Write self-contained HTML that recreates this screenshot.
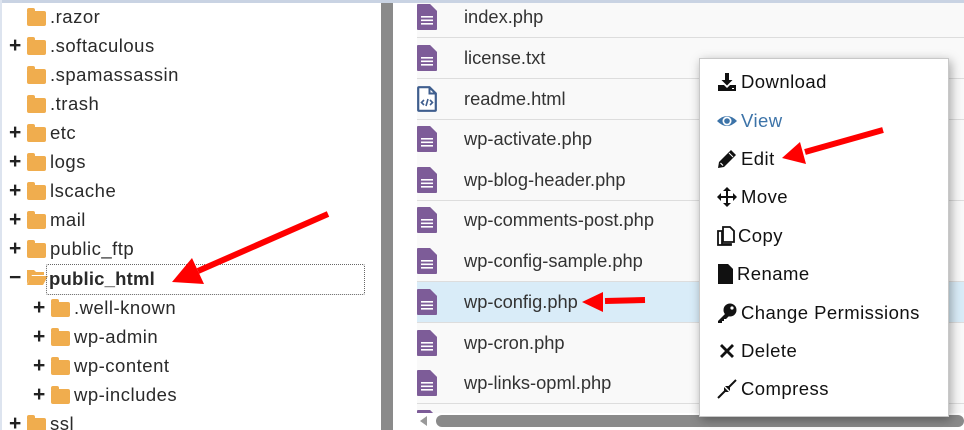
<!DOCTYPE html>
<html><head><meta charset="utf-8"><style>
*{margin:0;padding:0;box-sizing:border-box}
html,body{width:964px;height:430px;overflow:hidden}
body{background:#fff;position:relative;font-family:"Liberation Sans",sans-serif;color:#222}
.abs{position:absolute}
.tr{position:absolute;font-size:18.5px;letter-spacing:0.5px;line-height:20px;color:#2a2a2a;white-space:nowrap}
.fold{position:absolute;width:19px;height:15px;background:#f0ad4e;border-radius:2px}
.fold:before{content:"";position:absolute;left:0;top:-3px;width:8px;height:4px;background:#f0ad4e;border-radius:2px 2px 0 0}
.pl{position:absolute;font-size:21px;font-weight:bold;line-height:20px;color:#222}
.row{position:absolute;left:417px;width:547px;height:41px;background:#f9f9f9;border-bottom:1px solid #ddd}
.fn{position:absolute;left:464px;font-size:18.3px;line-height:20px;color:#333;white-space:nowrap}
.fi{position:absolute;left:417px;width:20px;height:26px}
.mi{position:absolute;left:741px;font-size:18.5px;letter-spacing:0.45px;line-height:20px;color:#111;white-space:nowrap}
.ic{position:absolute;left:717px;width:20px;height:20px}
</style></head><body>
<div class="abs" style="left:0;top:0;width:964px;height:3px;background:#c9d3e3"></div>
<div class="abs" style="left:0;top:0;width:2px;height:430px;background:#dde4ef"></div>
<div class="abs" style="left:381px;top:3px;width:12px;height:427px;background:#8a8a8a"></div>

<div class="fold" style="left:27px;top:11px"></div><div class="tr" style="left:50px;top:7px">.razor</div>
<div class="pl" style="left:9px;top:36px">+</div><div class="fold" style="left:27px;top:40px"></div><div class="tr" style="left:50px;top:36px">.softaculous</div>
<div class="fold" style="left:27px;top:69px"></div><div class="tr" style="left:50px;top:65px">.spamassassin</div>
<div class="fold" style="left:27px;top:98px"></div><div class="tr" style="left:50px;top:94px">.trash</div>
<div class="pl" style="left:9px;top:123px">+</div><div class="fold" style="left:27px;top:127px"></div><div class="tr" style="left:50px;top:123px">etc</div>
<div class="pl" style="left:9px;top:152px">+</div><div class="fold" style="left:27px;top:156px"></div><div class="tr" style="left:50px;top:152px">logs</div>
<div class="pl" style="left:9px;top:181px">+</div><div class="fold" style="left:27px;top:185px"></div><div class="tr" style="left:50px;top:181px">lscache</div>
<div class="pl" style="left:9px;top:210px">+</div><div class="fold" style="left:27px;top:214px"></div><div class="tr" style="left:50px;top:210px">mail</div>
<div class="pl" style="left:9px;top:239px">+</div><div class="fold" style="left:27px;top:243px"></div><div class="tr" style="left:50px;top:239px">public_ftp</div>
<div class="pl" style="left:9px;top:268px">−</div>
<svg class="abs" style="left:26px;top:268px" width="22" height="18"><path d="M1 2h7l2 2h8v3H6L1 16z" fill="#f0ad4e"/><path d="M5 8h17l-5 9H1z" fill="#f0ad4e"/></svg>
<div class="abs" style="left:46px;top:264px;width:319px;height:31px;border:1px dotted #666;border-radius:2px"></div>
<div class="tr" style="left:49px;top:269px;font-weight:bold;letter-spacing:0.2px">public_html</div>
<div class="pl" style="left:33px;top:298px">+</div><div class="fold" style="left:51px;top:302px"></div><div class="tr" style="left:74px;top:298px">.well-known</div>
<div class="pl" style="left:33px;top:327px">+</div><div class="fold" style="left:51px;top:331px"></div><div class="tr" style="left:74px;top:327px">wp-admin</div>
<div class="pl" style="left:33px;top:356px">+</div><div class="fold" style="left:51px;top:360px"></div><div class="tr" style="left:74px;top:356px">wp-content</div>
<div class="pl" style="left:33px;top:385px">+</div><div class="fold" style="left:51px;top:389px"></div><div class="tr" style="left:74px;top:385px">wp-includes</div>
<div class="pl" style="left:9px;top:414px">+</div><div class="fold" style="left:27px;top:418px"></div><div class="tr" style="left:50px;top:414px">ssl</div>

<div class="row" style="top:3px;height:35px"></div>
<div class="row" style="top:38px"></div>
<div class="row" style="top:79px"></div>
<div class="row" style="top:120px"></div>
<div class="row" style="top:160px"></div>
<div class="row" style="top:201px"></div>
<div class="row" style="top:241px"></div>
<div class="row" style="top:282px;background:#d9ecf8"></div>
<div class="row" style="top:323px"></div>
<div class="row" style="top:363px"></div>
<div class="row" style="top:404px;border:none"></div>

<svg width="0" height="0" style="position:absolute"><defs>
<symbol id="doc" viewBox="0 0 20 26"><path d="M0 1Q0 0 1 0h12l7 7v18q0 1-1 1H1q-1 0-1-1z" fill="#7d5c98"/><path d="M13 0v7h7" fill="#fff" opacity=".9"/><path d="M13 0l7 7h-7z" fill="#7d5c98"/><rect x="4" y="12" width="12" height="1.6" fill="#fff"/><rect x="4" y="15.5" width="12" height="1.6" fill="#fff"/><rect x="4" y="19" width="12" height="1.6" fill="#fff"/></symbol>
</defs></svg>
<svg class="fi" style="top:4px"><use href="#doc"/></svg><div class="fn" style="top:7px">index.php</div>
<svg class="fi" style="top:45px"><use href="#doc"/></svg><div class="fn" style="top:48px">license.txt</div>
<svg class="fi" style="top:86px" viewBox="0 0 20 26"><path d="M1.2 2Q1.2 1.2 2 1.2h10.5l6.3 6.3V24q0 .8-.8.8H2q-.8 0-.8-.8z" fill="#fff" stroke="#3f5e8e" stroke-width="2.2"/><path d="M12.5 1.5v6h6" fill="none" stroke="#3f5e8e" stroke-width="2"/><path d="M7 14l-2.5 2.5L7 19M13 14l2.5 2.5L13 19M11 13l-2 7" fill="none" stroke="#3f5e8e" stroke-width="1.6"/></svg><div class="fn" style="top:89px">readme.html</div>
<svg class="fi" style="top:126px"><use href="#doc"/></svg><div class="fn" style="top:129px">wp-activate.php</div>
<svg class="fi" style="top:167px"><use href="#doc"/></svg><div class="fn" style="top:170px">wp-blog-header.php</div>
<svg class="fi" style="top:207px"><use href="#doc"/></svg><div class="fn" style="top:210px">wp-comments-post.php</div>
<svg class="fi" style="top:248px"><use href="#doc"/></svg><div class="fn" style="top:251px">wp-config-sample.php</div>
<svg class="fi" style="top:289px"><use href="#doc"/></svg><div class="fn" style="top:292px">wp-config.php</div>
<svg class="fi" style="top:330px"><use href="#doc"/></svg><div class="fn" style="top:333px">wp-cron.php</div>
<svg class="fi" style="top:370px"><use href="#doc"/></svg><div class="fn" style="top:373px">wp-links-opml.php</div>
<svg class="fi" style="top:410px"><use href="#doc"/></svg>
<div class="abs" style="left:417px;top:413px;width:547px;height:17px;background:#fff"></div>
<svg class="abs" style="left:419px;top:415px" width="10" height="12"><path d="M8 1L1 6l7 5z" fill="#999"/></svg>
<div class="abs" style="left:436px;top:415px;width:528px;height:12px;background:#8a8a8a;border-radius:6px"></div>

<div class="abs" style="left:699px;top:58px;width:250px;height:359px;background:#fff;border:1px solid #c8c8c8;box-shadow:2px 3px 10px rgba(0,0,0,.35)"></div>
<svg class="ic" style="top:72px" viewBox="0 0 20 20"><path d="M8 1h4v7h3.5L10 13.5 4.5 8H8z" fill="#111"/><path d="M1 13h6l3 3 3-3h6v6H1z" fill="#111"/><rect x="15" y="16" width="2" height="1" fill="#fff"/></svg><div class="mi" style="top:72px">Download</div>
<svg class="ic" style="top:111px" viewBox="0 0 20 20"><path d="M0 10Q10 0 20 10Q10 20 0 10z" fill="#3c73a8"/><circle cx="10" cy="10" r="4.5" fill="#fff"/><circle cx="10" cy="10" r="2.8" fill="#3c73a8"/></svg><div class="mi" style="top:111px;color:#3c73a8">View</div>
<svg class="ic" style="top:149px" viewBox="0 0 20 20"><path d="M14 1l5 5L7 18l-6 1 1-6z" fill="#111"/><path d="M3.5 14l2.5 2.5" stroke="#fff" stroke-width="1.2"/><path d="M12 4l4 4" stroke="#fff" stroke-width="1"/></svg><div class="mi" style="top:149px">Edit</div>
<svg class="ic" style="top:187px" viewBox="0 0 20 20"><path d="M10 0l4 4h-3v5h5V6l4 4-4 4v-3h-5v5h3l-4 4-4-4h3v-5H4v3l-4-4 4-4v3h5V4H6z" fill="#111"/></svg><div class="mi" style="top:187px">Move</div>
<svg class="ic" style="top:226px" viewBox="0 0 20 20"><path d="M6 1h7l4 4v11H6z M1 5h4v13h9v1H1z" fill="none" stroke="#111" stroke-width="1.8"/></svg><div class="mi" style="top:226px;left:738px">Copy</div>
<svg class="ic" style="top:264px;left:716px" viewBox="0 0 20 20"><path d="M2 0h10l5 5v15H2z" fill="#111"/><path d="M12 0v5h5" fill="#fff"/><path d="M12 0l5 5h-5z" fill="#111"/></svg><div class="mi" style="top:264px;left:737px">Rename</div>
<svg class="ic" style="top:303px" viewBox="0 0 20 20"><circle cx="13" cy="7" r="6.5" fill="#111"/><path d="M9 10L1 18v2h4v-2h2v-2h2l3-3z" fill="#111"/><circle cx="15" cy="5" r="1.6" fill="#fff"/></svg><div class="mi" style="top:303px">Change Permissions</div>
<svg class="ic" style="top:341px" viewBox="0 0 20 20"><path d="M3 5L5 3l5 5 5-5 2 2-5 5 5 5-2 2-5-5-5 5-2-2 5-5z" fill="#111"/></svg><div class="mi" style="top:341px">Delete</div>
<svg class="ic" style="top:379px" viewBox="0 0 20 20"><path d="M1 19l7-7M19 1l-7 7" stroke="#111" stroke-width="2"/><path d="M7 8v5h5z M13 12V7H8z" fill="#111"/></svg><div class="mi" style="top:379px">Compress</div>

<svg class="abs" style="left:0;top:0" width="964" height="430">
<g stroke="#f00" stroke-width="6" fill="#f00">
<line x1="328" y1="214" x2="198" y2="271"/>
<line x1="883" y1="130" x2="805" y2="152"/>
<line x1="645" y1="300" x2="605" y2="301"/>
</g>
<g fill="#f00">
<polygon points="172,282 192,258 204,284"/>
<polygon points="782,158 800,142 806,164"/>
<polygon points="582,302 603,292 603,312"/>
</g>
</svg>
</body></html>
